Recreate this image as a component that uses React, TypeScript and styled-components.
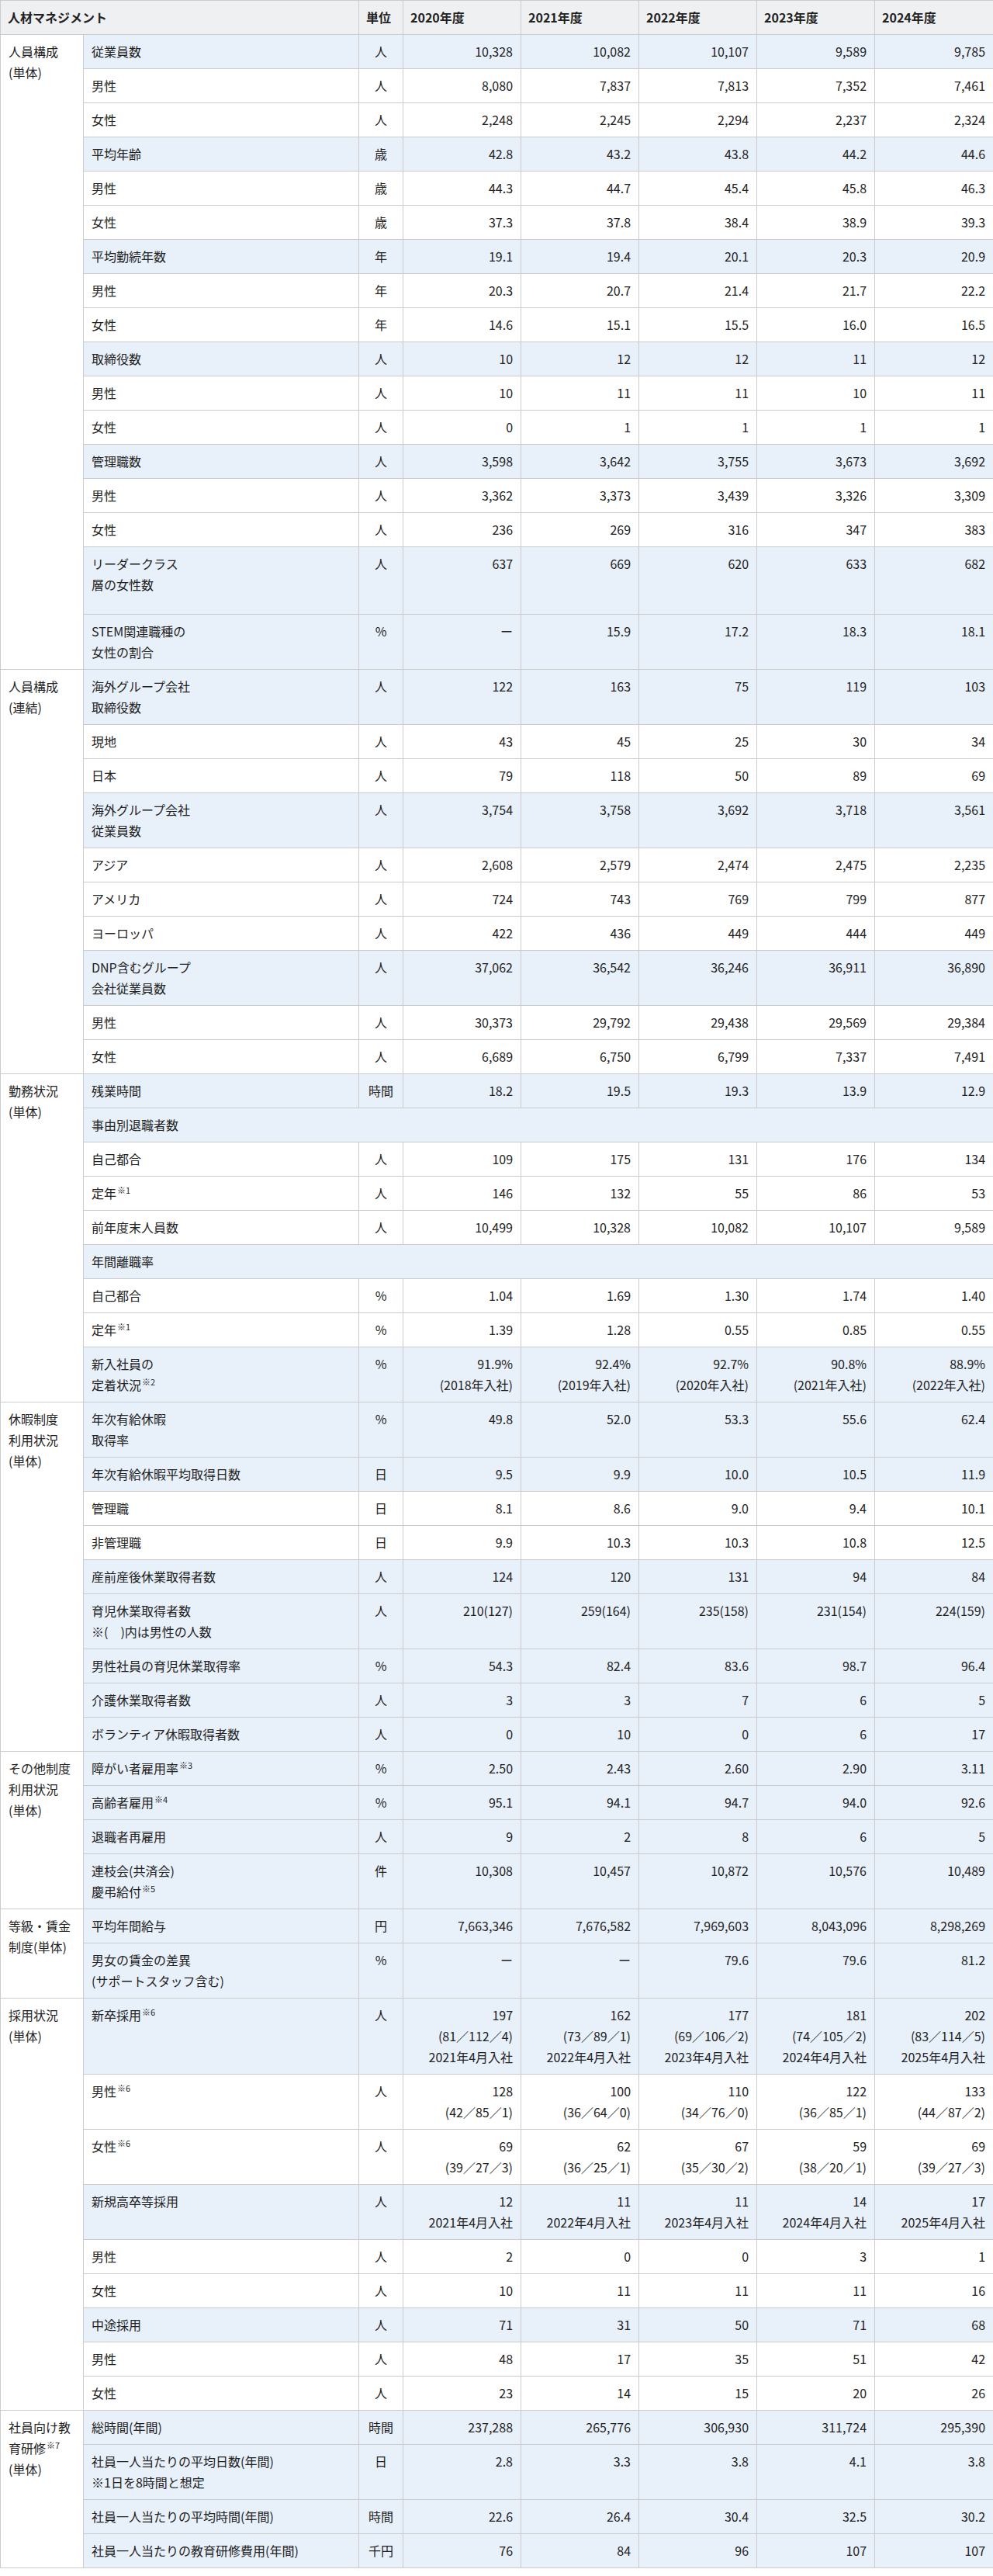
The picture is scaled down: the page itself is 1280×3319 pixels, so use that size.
import React from 'react';
import styled, { createGlobalStyle } from 'styled-components';

type Tone = 'blue' | 'white';

type Row = {
  label: React.ReactNode;
  unit?: string;
  values?: string[];
  tone: Tone;
  span?: boolean;
  tall?: boolean;
};

type Section = {
  label: React.ReactNode;
  rows: Row[];
};

const GlobalStyle = createGlobalStyle`
  body {
    margin: 0;
    background: #fff;
    color: #222;
    font-family: "Noto Sans CJK JP", "Noto Sans", sans-serif;
  }
`;

const Table = styled.table`
  width: 1280px;
  border-collapse: collapse;
  table-layout: fixed;
  font-size: 16px;
  line-height: 27px;
`;

const HeadCell = styled.th`
  background: #eff0f2;
  border: 1px solid #cccccc;
  padding: 8px 9px;
  text-align: left;
  font-weight: 700;
  white-space: nowrap;
`;

const GroupCell = styled.td`
  background: #fff;
  border: 1px solid #cccccc;
  padding: 8px 10px;
  vertical-align: top;
`;

const ItemCell = styled.td<{ $tone: Tone; $tall?: boolean }>`
  background: ${({ $tone }) => ($tone === 'blue' ? '#e8f0fa' : '#fff')};
  border: 1px solid #cccccc;
  padding: 8px 10px ${({ $tall }) => ($tall ? '24px' : '8px')};
  vertical-align: top;
  text-align: left;
`;

const UnitCell = styled.td<{ $tone: Tone }>`
  background: ${({ $tone }) => ($tone === 'blue' ? '#e8f0fa' : '#fff')};
  border: 1px solid #cccccc;
  padding: 8px 2px;
  vertical-align: top;
  text-align: center;
  white-space: nowrap;
`;

const ValueCell = styled.td<{ $tone: Tone }>`
  background: ${({ $tone }) => ($tone === 'blue' ? '#e8f0fa' : '#fff')};
  border: 1px solid #cccccc;
  padding: 8px 10px;
  vertical-align: top;
  text-align: right;
  white-space: nowrap;
`;

const Note = styled.sup`
  font-size: 11px;
  line-height: 0;
  vertical-align: 6px;
  margin-left: 1px;
`;

const sections: Section[] = [
  {
    label: <>人員構成<br />(単体)</>,
    rows: [
      { label: '従業員数', unit: '人', values: ['10,328', '10,082', '10,107', '9,589', '9,785'], tone: 'blue' },
      { label: '男性', unit: '人', values: ['8,080', '7,837', '7,813', '7,352', '7,461'], tone: 'white' },
      { label: '女性', unit: '人', values: ['2,248', '2,245', '2,294', '2,237', '2,324'], tone: 'white' },
      { label: '平均年齢', unit: '歳', values: ['42.8', '43.2', '43.8', '44.2', '44.6'], tone: 'blue' },
      { label: '男性', unit: '歳', values: ['44.3', '44.7', '45.4', '45.8', '46.3'], tone: 'white' },
      { label: '女性', unit: '歳', values: ['37.3', '37.8', '38.4', '38.9', '39.3'], tone: 'white' },
      { label: '平均勤続年数', unit: '年', values: ['19.1', '19.4', '20.1', '20.3', '20.9'], tone: 'blue' },
      { label: '男性', unit: '年', values: ['20.3', '20.7', '21.4', '21.7', '22.2'], tone: 'white' },
      { label: '女性', unit: '年', values: ['14.6', '15.1', '15.5', '16.0', '16.5'], tone: 'white' },
      { label: '取締役数', unit: '人', values: ['10', '12', '12', '11', '12'], tone: 'blue' },
      { label: '男性', unit: '人', values: ['10', '11', '11', '10', '11'], tone: 'white' },
      { label: '女性', unit: '人', values: ['0', '1', '1', '1', '1'], tone: 'white' },
      { label: '管理職数', unit: '人', values: ['3,598', '3,642', '3,755', '3,673', '3,692'], tone: 'blue' },
      { label: '男性', unit: '人', values: ['3,362', '3,373', '3,439', '3,326', '3,309'], tone: 'white' },
      { label: '女性', unit: '人', values: ['236', '269', '316', '347', '383'], tone: 'white' },
      { label: <>リーダークラス<br />層の女性数</>, unit: '人', values: ['637', '669', '620', '633', '682'], tone: 'blue', tall: true },
      { label: <>STEM関連職種の<br />女性の割合</>, unit: '%', values: ['ー', '15.9', '17.2', '18.3', '18.1'], tone: 'blue' },
    ],
  },
  {
    label: <>人員構成<br />(連結)</>,
    rows: [
      { label: <>海外グループ会社<br />取締役数</>, unit: '人', values: ['122', '163', '75', '119', '103'], tone: 'blue' },
      { label: '現地', unit: '人', values: ['43', '45', '25', '30', '34'], tone: 'white' },
      { label: '日本', unit: '人', values: ['79', '118', '50', '89', '69'], tone: 'white' },
      { label: <>海外グループ会社<br />従業員数</>, unit: '人', values: ['3,754', '3,758', '3,692', '3,718', '3,561'], tone: 'blue' },
      { label: 'アジア', unit: '人', values: ['2,608', '2,579', '2,474', '2,475', '2,235'], tone: 'white' },
      { label: 'アメリカ', unit: '人', values: ['724', '743', '769', '799', '877'], tone: 'white' },
      { label: 'ヨーロッパ', unit: '人', values: ['422', '436', '449', '444', '449'], tone: 'white' },
      { label: <>DNP含むグループ<br />会社従業員数</>, unit: '人', values: ['37,062', '36,542', '36,246', '36,911', '36,890'], tone: 'blue' },
      { label: '男性', unit: '人', values: ['30,373', '29,792', '29,438', '29,569', '29,384'], tone: 'white' },
      { label: '女性', unit: '人', values: ['6,689', '6,750', '6,799', '7,337', '7,491'], tone: 'white' },
    ],
  },
  {
    label: <>勤務状況<br />(単体)</>,
    rows: [
      { label: '残業時間', unit: '時間', values: ['18.2', '19.5', '19.3', '13.9', '12.9'], tone: 'blue' },
      { label: '事由別退職者数', tone: 'blue', span: true },
      { label: '自己都合', unit: '人', values: ['109', '175', '131', '176', '134'], tone: 'white' },
      { label: <>定年<Note>※1</Note></>, unit: '人', values: ['146', '132', '55', '86', '53'], tone: 'white' },
      { label: '前年度末人員数', unit: '人', values: ['10,499', '10,328', '10,082', '10,107', '9,589'], tone: 'white' },
      { label: '年間離職率', tone: 'blue', span: true },
      { label: '自己都合', unit: '%', values: ['1.04', '1.69', '1.30', '1.74', '1.40'], tone: 'white' },
      { label: <>定年<Note>※1</Note></>, unit: '%', values: ['1.39', '1.28', '0.55', '0.85', '0.55'], tone: 'white' },
      {
        label: <>新入社員の<br />定着状況<Note>※2</Note></>,
        unit: '%',
        values: ['91.9%\n(2018年入社)', '92.4%\n(2019年入社)', '92.7%\n(2020年入社)', '90.8%\n(2021年入社)', '88.9%\n(2022年入社)'],
        tone: 'blue',
      },
    ],
  },
  {
    label: <>休暇制度<br />利用状況<br />(単体)</>,
    rows: [
      { label: <>年次有給休暇<br />取得率</>, unit: '%', values: ['49.8', '52.0', '53.3', '55.6', '62.4'], tone: 'blue' },
      { label: '年次有給休暇平均取得日数', unit: '日', values: ['9.5', '9.9', '10.0', '10.5', '11.9'], tone: 'blue' },
      { label: '管理職', unit: '日', values: ['8.1', '8.6', '9.0', '9.4', '10.1'], tone: 'white' },
      { label: '非管理職', unit: '日', values: ['9.9', '10.3', '10.3', '10.8', '12.5'], tone: 'white' },
      { label: '産前産後休業取得者数', unit: '人', values: ['124', '120', '131', '94', '84'], tone: 'blue' },
      {
        label: <>育児休業取得者数<br />※(　)内は男性の人数</>,
        unit: '人',
        values: ['210(127)', '259(164)', '235(158)', '231(154)', '224(159)'],
        tone: 'blue',
      },
      { label: '男性社員の育児休業取得率', unit: '%', values: ['54.3', '82.4', '83.6', '98.7', '96.4'], tone: 'blue' },
      { label: '介護休業取得者数', unit: '人', values: ['3', '3', '7', '6', '5'], tone: 'blue' },
      { label: 'ボランティア休暇取得者数', unit: '人', values: ['0', '10', '0', '6', '17'], tone: 'blue' },
    ],
  },
  {
    label: <>その他制度<br />利用状況<br />(単体)</>,
    rows: [
      { label: <>障がい者雇用率<Note>※3</Note></>, unit: '%', values: ['2.50', '2.43', '2.60', '2.90', '3.11'], tone: 'blue' },
      { label: <>高齢者雇用<Note>※4</Note></>, unit: '%', values: ['95.1', '94.1', '94.7', '94.0', '92.6'], tone: 'blue' },
      { label: '退職者再雇用', unit: '人', values: ['9', '2', '8', '6', '5'], tone: 'blue' },
      {
        label: <>連枝会(共済会)<br />慶弔給付<Note>※5</Note></>,
        unit: '件',
        values: ['10,308', '10,457', '10,872', '10,576', '10,489'],
        tone: 'blue',
      },
    ],
  },
  {
    label: <>等級・賃金<br />制度(単体)</>,
    rows: [
      { label: '平均年間給与', unit: '円', values: ['7,663,346', '7,676,582', '7,969,603', '8,043,096', '8,298,269'], tone: 'blue' },
      { label: <>男女の賃金の差異<br />(サポートスタッフ含む)</>, unit: '%', values: ['ー', 'ー', '79.6', '79.6', '81.2'], tone: 'blue' },
    ],
  },
  {
    label: <>採用状況<br />(単体)</>,
    rows: [
      {
        label: <>新卒採用<Note>※6</Note></>,
        unit: '人',
        values: [
          '197\n(81／112／4)\n2021年4月入社',
          '162\n(73／89／1)\n2022年4月入社',
          '177\n(69／106／2)\n2023年4月入社',
          '181\n(74／105／2)\n2024年4月入社',
          '202\n(83／114／5)\n2025年4月入社',
        ],
        tone: 'blue',
      },
      {
        label: <>男性<Note>※6</Note></>,
        unit: '人',
        values: ['128\n(42／85／1)', '100\n(36／64／0)', '110\n(34／76／0)', '122\n(36／85／1)', '133\n(44／87／2)'],
        tone: 'white',
      },
      {
        label: <>女性<Note>※6</Note></>,
        unit: '人',
        values: ['69\n(39／27／3)', '62\n(36／25／1)', '67\n(35／30／2)', '59\n(38／20／1)', '69\n(39／27／3)'],
        tone: 'white',
      },
      {
        label: '新規高卒等採用',
        unit: '人',
        values: ['12\n2021年4月入社', '11\n2022年4月入社', '11\n2023年4月入社', '14\n2024年4月入社', '17\n2025年4月入社'],
        tone: 'blue',
      },
      { label: '男性', unit: '人', values: ['2', '0', '0', '3', '1'], tone: 'white' },
      { label: '女性', unit: '人', values: ['10', '11', '11', '11', '16'], tone: 'white' },
      { label: '中途採用', unit: '人', values: ['71', '31', '50', '71', '68'], tone: 'blue' },
      { label: '男性', unit: '人', values: ['48', '17', '35', '51', '42'], tone: 'white' },
      { label: '女性', unit: '人', values: ['23', '14', '15', '20', '26'], tone: 'white' },
    ],
  },
  {
    label: <>社員向け教<br />育研修<Note>※7</Note><br />(単体)</>,
    rows: [
      { label: '総時間(年間)', unit: '時間', values: ['237,288', '265,776', '306,930', '311,724', '295,390'], tone: 'blue' },
      {
        label: <>社員一人当たりの平均日数(年間)<br />※1日を8時間と想定</>,
        unit: '日',
        values: ['2.8', '3.3', '3.8', '4.1', '3.8'],
        tone: 'blue',
      },
      { label: '社員一人当たりの平均時間(年間)', unit: '時間', values: ['22.6', '26.4', '30.4', '32.5', '30.2'], tone: 'blue' },
      { label: '社員一人当たりの教育研修費用(年間)', unit: '千円', values: ['76', '84', '96', '107', '107'], tone: 'blue' },
    ],
  },
];

const YEARS = ['2020年度', '2021年度', '2022年度', '2023年度', '2024年度'];

const Lines: React.FC<{ text: string }> = ({ text }) => (
  <>
    {text.split('\n').map((line, i) => (
      <React.Fragment key={i}>
        {i > 0 && <br />}
        {line}
      </React.Fragment>
    ))}
  </>
);

const App: React.FC = () => {
  return (
    <>
      <GlobalStyle />
      <Table>
        <colgroup>
          <col style={{ width: 107 }} />
          <col style={{ width: 355 }} />
          <col style={{ width: 57 }} />
          <col style={{ width: 152 }} />
          <col style={{ width: 152 }} />
          <col style={{ width: 152 }} />
          <col style={{ width: 152 }} />
          <col style={{ width: 153 }} />
        </colgroup>
        <thead>
          <tr>
            <HeadCell colSpan={2}>人材マネジメント</HeadCell>
            <HeadCell>単位</HeadCell>
            {YEARS.map((y) => (
              <HeadCell key={y}>{y}</HeadCell>
            ))}
          </tr>
        </thead>
        <tbody>
          {sections.map((section, si) =>
            section.rows.map((row, ri) => (
              <tr key={`${si}-${ri}`}>
                {ri === 0 && <GroupCell rowSpan={section.rows.length}>{section.label}</GroupCell>}
                {row.span ? (
                  <ItemCell $tone={row.tone} colSpan={7}>
                    {row.label}
                  </ItemCell>
                ) : (
                  <>
                    <ItemCell $tone={row.tone} $tall={row.tall}>
                      {row.label}
                    </ItemCell>
                    <UnitCell $tone={row.tone}>{row.unit}</UnitCell>
                    {row.values?.map((v, vi) => (
                      <ValueCell key={vi} $tone={row.tone}>
                        <Lines text={v} />
                      </ValueCell>
                    ))}
                  </>
                )}
              </tr>
            ))
          )}
        </tbody>
      </Table>
    </>
  );
};

export default App;
